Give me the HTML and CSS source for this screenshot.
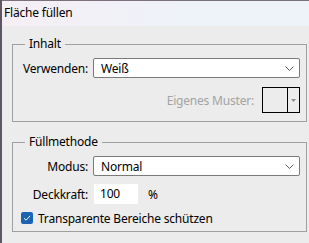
FILE: index.html
```html
<!DOCTYPE html>
<html lang="de">
<head>
<meta charset="utf-8">
<title>Fläche füllen</title>
<link rel="stylesheet" href="styles.css">
</head>
<body>
<div class="window">
  <div class="titlebar">Fläche füllen</div>
  <div class="content">
    <fieldset class="group group-inhalt">
      <legend>Inhalt</legend>
      <div class="form-row">
        <span class="lbl">Verwenden:</span>
        <div class="select">
          <span>Weiß</span>
          <svg class="chev" width="9" height="5" viewBox="0 0 9 5"><path d="M0.5 0.5 L4.5 4.5 L8.5 0.5" fill="none" stroke="#5a5a5a" stroke-width="1"/></svg>
        </div>
      </div>
      <div class="pattern-row">
        <span class="lbl-disabled">Eigenes Muster:</span>
        <div class="swatch">
          <div class="swatch-preview"></div>
          <div class="swatch-arrow">
            <svg width="5" height="3" viewBox="0 0 5 3"><path d="M0 0 H5 L2.5 3 Z" fill="#8c8c8c"/></svg>
          </div>
        </div>
      </div>
    </fieldset>

    <fieldset class="group group-fill">
      <legend>Füllmethode</legend>
      <div class="form-row">
        <span class="lbl">Modus:</span>
        <div class="select">
          <span>Normal</span>
          <svg class="chev" width="9" height="5" viewBox="0 0 9 5"><path d="M0.5 0.5 L4.5 4.5 L8.5 0.5" fill="none" stroke="#5a5a5a" stroke-width="1"/></svg>
        </div>
      </div>
      <div class="form-row opacity-row">
        <span class="lbl">Deckkraft:</span>
        <div class="opacity-ctrl">
          <div class="num-input">100</div>
          <span class="unit">%</span>
        </div>
      </div>
      <div class="check-row">
        <span class="checkbox">
          <svg width="12" height="12" viewBox="0 0 12 12"><path d="M3 6.2 L5.1 8.2 L9.2 3.8" fill="none" stroke="#fff" stroke-width="1"/></svg>
        </span>
        <span class="check-label">Transparente Bereiche schützen</span>
      </div>
    </fieldset>
  </div>
</div>
</body>
</html>
```

FILE: styles.css
```css
* { box-sizing: border-box; }

html, body {
  margin: 0;
  padding: 0;
  background: #ececec;
}

body {
  font-family: "Noto Sans", "Open Sans", sans-serif;
  font-size: 12px;
  letter-spacing: -0.2px;
  color: #000;
  width: 309px;
  height: 243px;
  overflow: hidden;
}

.window {
  height: 243px;
  border-left: 2px solid #5e5660;
  background: #ececec;
}

.titlebar {
  height: 26px;
  border-top: 1px solid #7b717c;
  background: linear-gradient(to right, #f5eff4, #eef2f9 60%);
  padding-left: 2px;
  line-height: 24px;
  font-size: 12px;
  color: #000;
}

.content {
  padding: 10px 2px 0 10px;
  display: flex;
  flex-direction: column;
  gap: 12px;
}

.group {
  margin: 0;
  border: 1px solid #a0a0a0;
  min-width: 0;
}

.group legend {
  margin-left: 12px;
  padding: 0 4px;
  line-height: 16px;
  font-size: 12px;
}

.group-inhalt {
  padding: 6px 6px 8px 0;
}

.group-fill {
  padding: 6px 6px 5px 0;
}

.form-row {
  display: grid;
  grid-template-columns: 75px 1fr;
  column-gap: 5px;
  align-items: center;
}

.lbl {
  text-align: right;
  white-space: nowrap;
}

.select {
  height: 20px;
  background: #fff;
  border: 1px solid #7a7a7a;
  border-radius: 2px;
  display: flex;
  align-items: center;
  justify-content: space-between;
  padding: 0 5px 0 7px;
}

.chev { display: block; }

.pattern-row {
  margin-top: 9px;
  display: flex;
  justify-content: flex-end;
  align-items: center;
  gap: 8px;
}

.lbl-disabled {
  color: #a3a3a3;
}

.swatch {
  width: 38px;
  height: 26px;
  border: 1px solid #000;
  display: flex;
}

.swatch-preview {
  flex: 1;
  border-right: 1px solid #000;
}

.swatch-arrow {
  width: 11px;
  display: flex;
  align-items: center;
  justify-content: center;
}

.swatch-arrow svg { display: block; }

.opacity-row {
  margin-top: 8px;
}

.opacity-ctrl {
  display: flex;
  align-items: center;
  gap: 10px;
}

.num-input {
  width: 44px;
  height: 20px;
  background: #fff;
  margin-left: 1px;
  padding-left: 6px;
  line-height: 20px;
}

.check-row {
  margin-top: 6px;
  padding-left: 8px;
  display: flex;
  align-items: center;
  gap: 5px;
  height: 16px;
}

.checkbox {
  width: 12px;
  height: 12px;
  border-radius: 2px;
  background: #1b63b5;
  display: block;
}

.checkbox svg { display: block; }
```
